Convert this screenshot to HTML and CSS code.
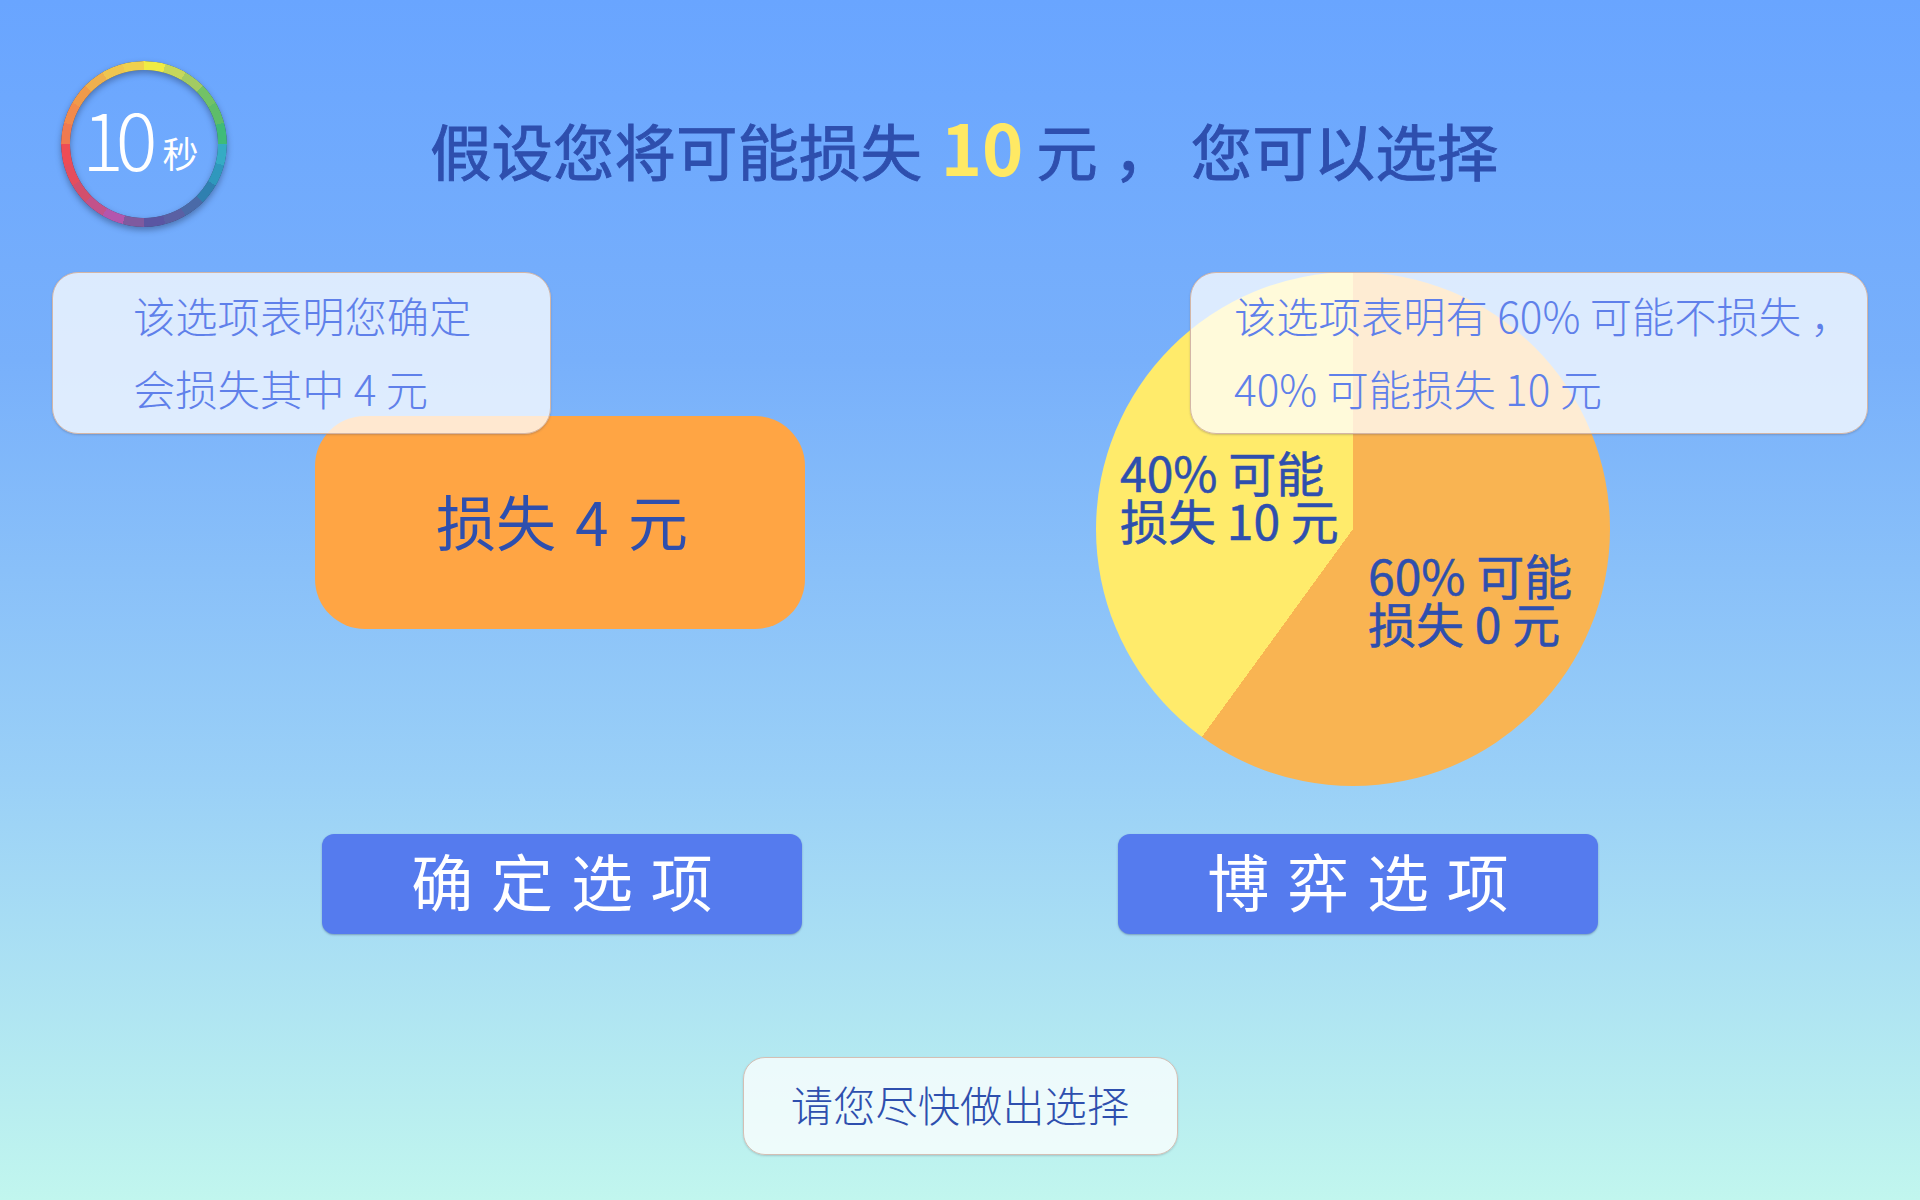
FILE: index.html
```html
<!DOCTYPE html>
<html lang="zh-CN">
<head>
<meta charset="utf-8">
<title>选择</title>
<link rel="stylesheet" href="styles.css">
</head>
<body>
<main class="page">
  <header class="header">
    <div class="timer">
      <div class="ring-shell"><div class="ring"></div></div>
      <div class="count"><span class="count-num">10</span><span class="count-unit">秒</span></div>
    </div>
    <h1 class="title">假设您将可能损失 <span class="title-num">10</span> 元 ， 您可以选择</h1>
  </header>
  <section class="options">
    <div class="option option-sure">
      <div class="figure">
        <div class="sure-box">损失 4 元</div>
      </div>
      <button class="choice">确 定 选 项</button>
      <div class="tip tip-sure">该选项表明您确定<br>会损失其中 4 元</div>
    </div>
    <div class="option option-gamble">
      <div class="figure">
        <div class="pie">
          <div class="pie-label pie-label-lose">40% 可能<br>损失 10 元</div>
          <div class="pie-label pie-label-keep">60% 可能<br>损失 0 元</div>
        </div>
      </div>
      <button class="choice">博 弈 选 项</button>
      <div class="tip tip-gamble">该选项表明有 60% 可能不损失 ，<br>40% 可能损失 10 元</div>
    </div>
  </section>
  <footer class="footer">
    <div class="hurry">请您尽快做出选择</div>
  </footer>
</main>
</body>
</html>
```
FILE: styles.css
```css
* { box-sizing: border-box; }
html, body { margin: 0; padding: 0; }
body {
  font-family: "Noto Sans CJK SC", "Noto Sans", sans-serif;
  color: #2e4fae;
}
.page {
  width: 1920px;
  height: 1200px;
  overflow: hidden;
  background: linear-gradient(180deg, #69a5ff 0%, #78b0fb 30%, #9ad0f7 65%, #c1f6ee 100%);
}
.header {
  display: flex;
  align-items: flex-start;
  height: 272px;
  padding: 61px 0 0 61px;
}
.timer {
  position: relative;
  width: 166px;
  height: 166px;
  flex: none;
}
.ring-shell {
  width: 166px;
  height: 166px;
  filter: drop-shadow(0 0 .6px rgba(40, 50, 70, .7)) drop-shadow(0 3px 3px rgba(30, 50, 90, .45));
}
.ring {
  width: 166px;
  height: 166px;
  border-radius: 50%;
  background: conic-gradient(
    #f0ec42 0deg 15deg, #c6d75c 15deg 30deg, #a3cb62 30deg 45deg, #72c266 45deg 60deg,
    #5ebd6a 60deg 75deg, #3fbb78 75deg 90deg, #35abc4 90deg 105deg, #2f98bd 105deg 120deg,
    #2f80b0 120deg 135deg, #4a6aa8 135deg 150deg, #5a60a4 150deg 165deg, #5a56a3 165deg 180deg,
    #7f5a9f 180deg 195deg, #b356ad 195deg 210deg, #c2528a 210deg 225deg, #d24f6d 225deg 240deg,
    #e64d5d 240deg 255deg, #ef4c55 255deg 270deg, #f07a50 270deg 285deg, #f28a4c 285deg 300deg,
    #f09a4a 300deg 315deg, #eeb04e 315deg 330deg, #eec550 330deg 345deg, #efd04d 345deg 360deg);
  -webkit-mask: radial-gradient(circle closest-side, transparent 73.5px, #000 74.5px);
  mask: radial-gradient(circle closest-side, transparent 73.5px, #000 74.5px);
}
.count {
  position: absolute;
  left: 21px;
  top: -7px;
  color: #fff;
  white-space: nowrap;
  line-height: 166px;
}
.count-num {
  font-size: 78px;
  font-weight: 300;
  letter-spacing: -8px;
}
.count-unit {
  display: inline-block;
  font-size: 36px;
  margin-left: 13px;
  vertical-align: 3px;
}
.title {
  margin: 40px 0 0 203px;
  font-size: 61.5px;
  line-height: 90px;
  font-weight: 400;
  -webkit-text-stroke: .9px #2e4fae;
  color: #2e4fae;
  white-space: nowrap;
  word-spacing: 2px;
}
.title-num {
  margin: 0 -3px 0 3px;
  font-size: 70px;
  color: #ffe964;
  -webkit-text-stroke: 0;
  font-weight: 700;
}
.options {
  display: grid;
  grid-template-columns: 1018px 574px;
  padding-left: 53px;
}
.option {
  position: relative;
  display: flex;
  flex-direction: column;
  align-items: center;
}
.figure {
  height: 562px;
}
.option-sure .figure {
  margin-right: 5px;
}
.option-gamble .figure {
  margin-right: 10px;
}
.sure-box {
  width: 490px;
  height: 213px;
  margin-top: 144px;
  padding: 0 0 6px 5px;
  border-radius: 50px;
  background: #ffa544;
  display: flex;
  align-items: center;
  justify-content: center;
  font-size: 60px;
  word-spacing: 6px;
}
.pie {
  position: relative;
  width: 514px;
  height: 514px;
  border-radius: 50%;
  background: conic-gradient(#f9b452 0 60%, #ffeb6b 60% 100%);
}
.pie-label {
  position: absolute;
  font-size: 48px;
  line-height: 48px;
  font-weight: 400;
  -webkit-text-stroke: .5px #2e4fae;
  white-space: nowrap;
  color: #2e4fae;
}
.pie-label-lose { left: 24px; top: 175px; }
.pie-label-keep { left: 272px; top: 278px; }
.choice {
  width: 480px;
  height: 100px;
  padding: 0;
  border: 0;
  border-radius: 12px;
  background: #557bee;
  box-shadow: 0 1px 2px rgba(60, 80, 120, .45);
  color: #fff;
  font-family: inherit;
  font-size: 62px;
  line-height: 92px;
  padding-bottom: 8px;
  word-spacing: 4px;
}
.tip {
  position: absolute;
  top: 0;
  left: -1px;
  height: 162px;
  border: 1px solid #d4b6a6;
  border-radius: 26px;
  background: rgba(255, 255, 255, .75);
  box-shadow: 0 1px 2px rgba(80, 80, 100, .3);
  font-size: 42.3px;
  line-height: 73px;
  font-weight: 300;
  color: #5f80ea;
  white-space: nowrap;
  padding-top: 5px;
}
.tip-sure {
  width: 499px;
  padding-left: 80px;
}
.tip-gamble {
  left: 119px;
  width: 678px;
  padding-left: 43px;
}
.footer {
  display: flex;
  justify-content: center;
  margin-top: 123px;
}
.hurry {
  width: 435px;
  height: 98px;
  border: 1px solid #d4bfb4;
  border-radius: 22px;
  background: rgba(255, 255, 255, .75);
  box-shadow: 0 1px 2px rgba(80, 80, 100, .25);
  font-size: 42.3px;
  line-height: 92px;
  font-weight: 300;
  text-align: center;
  color: #2e4fae;
}
```
